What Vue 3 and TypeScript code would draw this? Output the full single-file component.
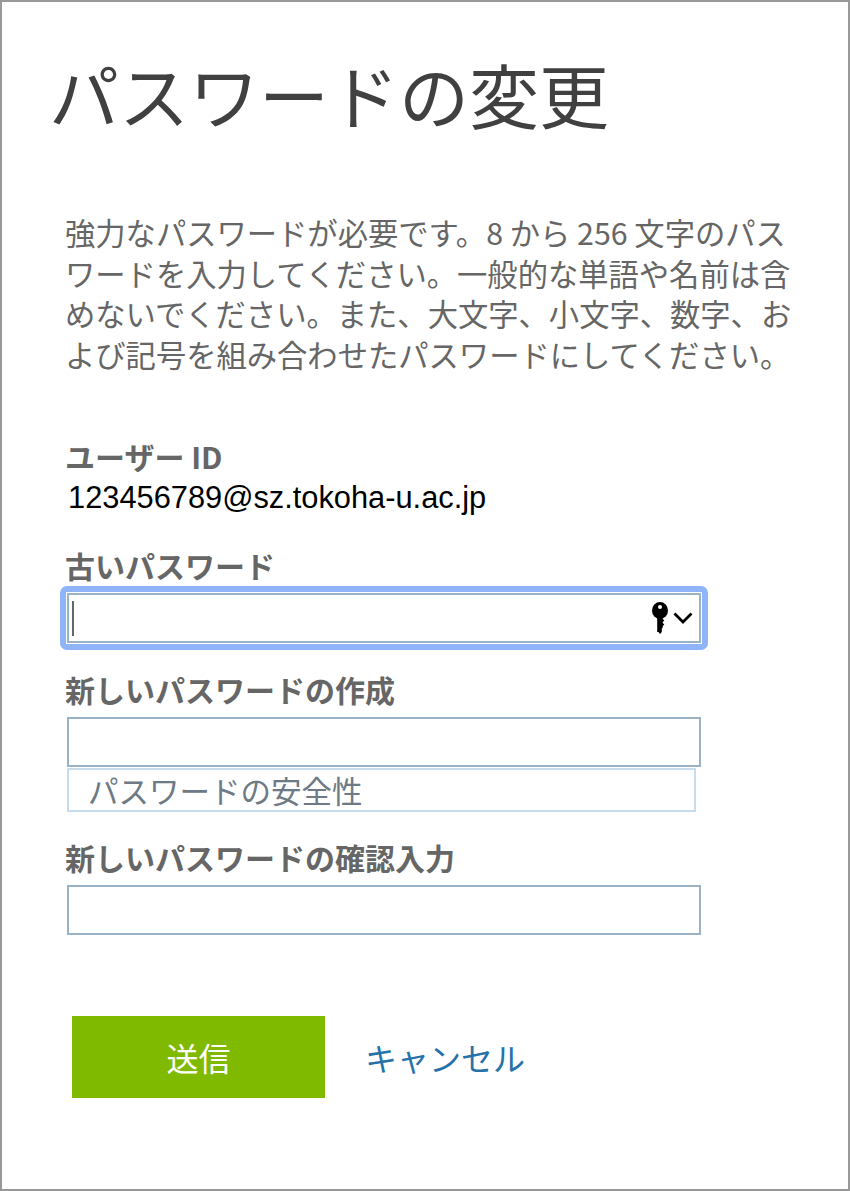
<script setup lang="ts">
const intro = [
  '強力なパスワードが必要です。8 から 256 文字のパス',
  'ワードを入力してください。一般的な単語や名前は含',
  'めないでください。また、大文字、小文字、数字、お',
  'よび記号を組み合わせたパスワードにしてください。',
]
</script>

<template>
  <div class="page">
    <h1 class="title">パスワードの変更</h1>
    <p class="intro">
      <span v-for="line in intro" :key="line" class="intro-line">{{ line }}</span>
    </p>

    <div class="label user-label">ユーザー ID</div>
    <div class="user-id">123456789@sz.tokoha-u.ac.jp</div>

    <div class="label old-label">古いパスワード</div>
    <div class="focus-ring">
      <div class="field focused">
        <span class="caret"></span>
        <svg class="key" width="16" height="32" viewBox="0 0 16 32">
          <ellipse cx="8" cy="8.500" rx="8" ry="8.500" fill="#000"/>
          <path fill="#000" d="M5.200 14h5.600v3l1.500 1.500-1.500 1.500v1l1.500 1.500-1.500 1.500v1.500l-1 1V30L8 32l-1.500-2H5.200z"/>
          <circle cx="8" cy="5" r="2" fill="#fff"/>
        </svg>
        <svg class="chevron" width="20" height="12" viewBox="0 0 20 12">
          <path d="M1.500 1.500l8.500 8.500 8.500-8.500" fill="none" stroke="#000" stroke-width="2.800"/>
        </svg>
      </div>
    </div>

    <div class="label new-label">新しいパスワードの作成</div>
    <div class="field"></div>
    <div class="strength">パスワードの安全性</div>

    <div class="label confirm-label">新しいパスワードの確認入力</div>
    <div class="field"></div>

    <div class="actions">
      <button type="button" class="submit">送信</button>
      <a class="cancel">キャンセル</a>
    </div>
  </div>
</template>

<style scoped>
.page {
  box-sizing: border-box;
  width: 850px;
  height: 1191px;
  border: 2px solid #999;
  background: #fff;
  padding: 0 0 0 65px;
  font-family: "Noto Sans CJK JP", "Open Sans", sans-serif;
  color: #666;
}

.title {
  margin: 50px 0 0 -18px;
  font-size: 70px;
  line-height: 84px;
  font-weight: 400;
  color: #404040;
}

.intro {
  margin: 76px 0 0 -2px;
  font-size: 30.300px;
  line-height: 40.500px;
  color: #666;
}

.intro-line {
  display: block;
  white-space: nowrap;
}

.label {
  margin-left: -2px;
  font-size: 30px;
  line-height: 36px;
  font-weight: 700;
  color: #666;
  white-space: nowrap;
}

.user-label {
  margin-top: 64px;
}

.user-id {
  margin: 6px 0 0 1px;
  font-family: "Liberation Sans", Arial, sans-serif;
  font-size: 30.800px;
  line-height: 36px;
  color: #000;
}

.old-label {
  margin-top: 31px;
}

.focus-ring {
  box-sizing: border-box;
  width: 648px;
  height: 64px;
  margin: 3px 0 0 -7px;
  padding: 7px;
  background: #8fb4f8;
  border-radius: 7px;
}

.field {
  box-sizing: border-box;
  width: 634px;
  height: 50px;
  border: 2px solid #9ab2c6;
  background: #fff;
}

.focus-ring .field {
  box-shadow: 0 0 0 1px #fff;
  display: flex;
  align-items: center;
  padding: 0 6px 0 3px;
}

.caret {
  width: 1.500px;
  height: 35px;
  background: #666;
}

.key {
  margin-left: auto;
}

.chevron {
  margin-left: 5px;
}

.new-label {
  margin-top: 21px;
}

.new-label + .field {
  margin-top: 10px;
}

.strength {
  box-sizing: border-box;
  width: 629px;
  height: 44px;
  margin-top: 1px;
  border: 2px solid #c7ddee;
  padding-left: 19px;
  font-size: 30.500px;
  line-height: 40px;
  color: #6e7a85;
  white-space: nowrap;
}

.confirm-label {
  margin-top: 27px;
}

.confirm-label + .field {
  margin-top: 10px;
}

.actions {
  display: flex;
  align-items: center;
  margin: 81px 0 0 5px;
}

.submit {
  width: 253px;
  height: 82px;
  border: none;
  background: #7fba00;
  color: #fff;
  font-family: inherit;
  font-size: 32px;
}

.cancel {
  margin-left: 40px;
  font-size: 32px;
  color: #2672a8;
}
</style>
